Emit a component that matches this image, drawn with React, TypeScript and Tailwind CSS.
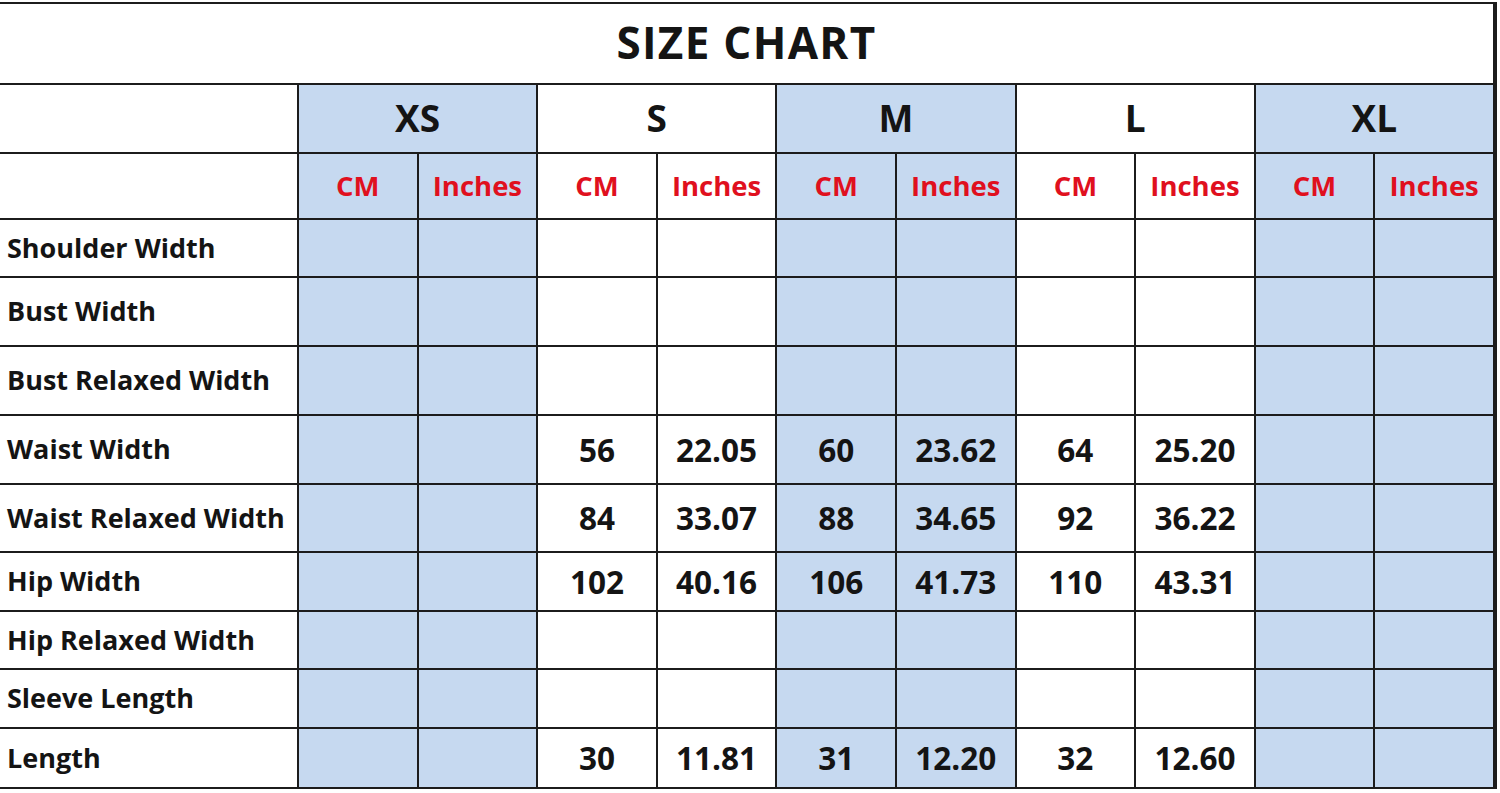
import React from "react";

// Size chart table, laid out as a grid whose gaps draw the rule lines
const SIZES = ["XS", "S", "M", "L", "XL"];
const BLUE = [true, false, true, false, true];

type Row = { label: string; h: string; values?: (string | null)[] };

const ROWS: Row[] = [
  { label: "Shoulder Width", h: "h-[56px]" },
  { label: "Bust Width", h: "h-[67px]" },
  { label: "Bust Relaxed Width", h: "h-[67px]" },
  {
    label: "Waist Width",
    h: "h-[67px]",
    values: [null, null, "56", "22.05", "60", "23.62", "64", "25.20", null, null],
  },
  {
    label: "Waist Relaxed Width",
    h: "h-[66px]",
    values: [null, null, "84", "33.07", "88", "34.65", "92", "36.22", null, null],
  },
  {
    label: "Hip Width",
    h: "h-[57px]",
    values: [null, null, "102", "40.16", "106", "41.73", "110", "43.31", null, null],
  },
  { label: "Hip Relaxed Width", h: "h-[56px]" },
  { label: "Sleeve Length", h: "h-[57px]" },
  {
    label: "Length",
    h: "h-[58px]",
    values: [null, null, "30", "11.81", "31", "12.20", "32", "12.60", null, null],
  },
];

const cellBg = (col: number) => (BLUE[Math.floor(col / 2)] ? "bg-[#c6d9f0]" : "bg-white");

export default function App() {
  return (
    <div
      className="w-[1500px] h-[793px] bg-white pt-[2px] text-[#141414]"
      style={{ fontFamily: '"Open Sans", "Noto Sans", sans-serif' }}
    >
      <div className="grid w-[1497px] grid-cols-[297px_repeat(10,117.6px)] gap-[2px] border-t-2 border-r-2 border-b-2 border-[#1c1c1c] bg-[#1c1c1c]">
        {/* title */}
        <div className="col-span-11 h-[79px] bg-white flex items-center justify-center pb-[4px]">
          <span className="text-[44px] font-bold tracking-[0.03em]">SIZE CHART</span>
        </div>

        {/* size headers */}
        <div className="h-[67px] bg-white" />
        {SIZES.map((s, i) => (
          <div
            key={s}
            className={`col-span-2 h-[67px] flex items-center justify-center pb-[2px] ${
              BLUE[i] ? "bg-[#c6d9f0]" : "bg-white"
            }`}
          >
            <span className="text-[37px] font-bold">{s}</span>
          </div>
        ))}

        {/* unit headers */}
        <div className="h-[64px] bg-white" />
        {Array.from({ length: 10 }).map((_, c) => (
          <div
            key={c}
            className={`h-[64px] flex items-center justify-center ${cellBg(c)}`}
          >
            <span className="text-[27.5px] font-bold text-[#e0101e]">
              {c % 2 === 0 ? "CM" : "Inches"}
            </span>
          </div>
        ))}

        {/* measurement rows */}
        {ROWS.map((row) => (
          <React.Fragment key={row.label}>
            <div className={`${row.h} bg-white flex items-center pl-[7px]`}>
              <span className="text-[27px] font-bold whitespace-nowrap">{row.label}</span>
            </div>
            {Array.from({ length: 10 }).map((_, c) => (
              <div
                key={c}
                className={`${row.h} flex items-center justify-center ${cellBg(c)}`}
              >
                {row.values?.[c] && (
                  <span className="text-[31.5px] font-bold">{row.values[c]}</span>
                )}
              </div>
            ))}
          </React.Fragment>
        ))}
      </div>
    </div>
  );
}
